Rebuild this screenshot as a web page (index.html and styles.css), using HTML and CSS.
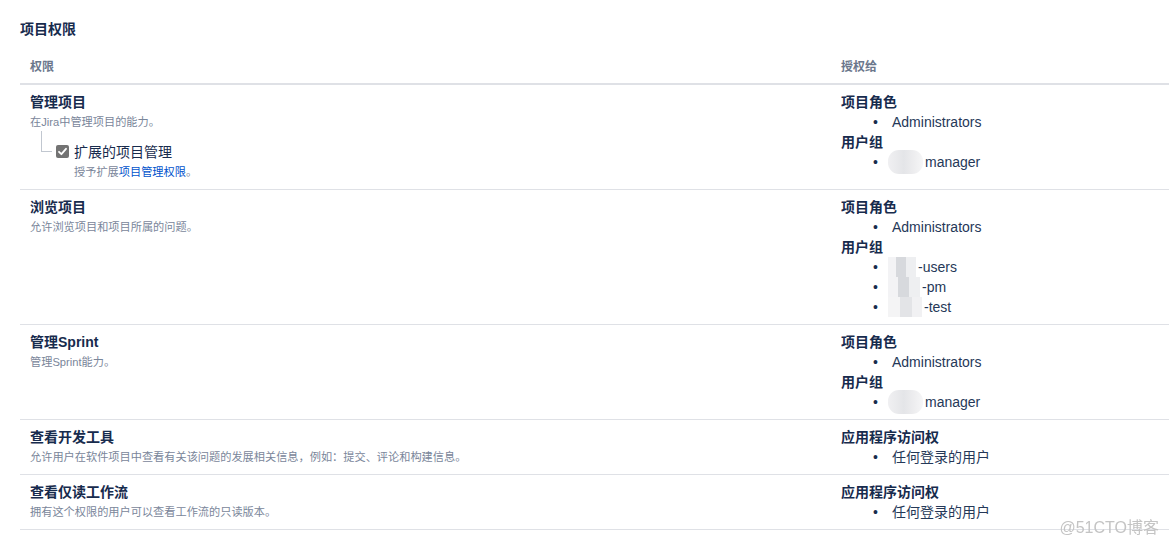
FILE: index.html
```
<!DOCTYPE html>
<html lang="zh-CN">
<head>
<meta charset="UTF-8">
<title>项目权限</title>
<link rel="stylesheet" href="styles.css">
</head>
<body>
<div class="page">
  <h2 class="title">项目权限</h2>
  <table class="perms">
    <thead>
      <tr><th class="col-name">权限</th><th>授权给</th></tr>
    </thead>
    <tbody>
      <tr>
        <td>
          <div class="perm-name">管理项目</div>
          <div class="perm-desc">在Jira中管理项目的能力。</div>
          <div class="sub">
            <div class="sub-row">
              <span class="connector"></span>
              <span class="check"><svg width="13" height="13" viewBox="0 0 13 13"><path d="M3 6.8 L5.4 9.2 L10 3.8" fill="none" stroke="#fff" stroke-width="1.8" stroke-linecap="round" stroke-linejoin="round"/></svg></span>
              <span class="sub-label">扩展的项目管理</span>
            </div>
            <div class="perm-desc sub-desc">授予扩展<a href="#">项目管理权限</a>。</div>
          </div>
        </td>
        <td>
          <div class="grant-title">项目角色</div>
          <ul class="grant-list"><li>Administrators</li></ul>
          <div class="grant-title">用户组</div>
          <ul class="grant-list"><li><span class="blur round"></span>manager</li></ul>
        </td>
      </tr>
      <tr>
        <td>
          <div class="perm-name">浏览项目</div>
          <div class="perm-desc">允许浏览项目和项目所属的问题。</div>
        </td>
        <td>
          <div class="grant-title">项目角色</div>
          <ul class="grant-list"><li>Administrators</li></ul>
          <div class="grant-title">用户组</div>
          <ul class="grant-list">
            <li><span class="blur mosaic short"></span>-users</li>
            <li><span class="blur mosaic"></span>-pm</li>
            <li><span class="blur mosaic wide"></span>-test</li>
          </ul>
        </td>
      </tr>
      <tr>
        <td>
          <div class="perm-name">管理Sprint</div>
          <div class="perm-desc">管理Sprint能力。</div>
        </td>
        <td>
          <div class="grant-title">项目角色</div>
          <ul class="grant-list"><li>Administrators</li></ul>
          <div class="grant-title">用户组</div>
          <ul class="grant-list"><li><span class="blur round"></span>manager</li></ul>
        </td>
      </tr>
      <tr>
        <td>
          <div class="perm-name">查看开发工具</div>
          <div class="perm-desc">允许用户在软件项目中查看有关该问题的发展相关信息，例如：提交、评论和构建信息。</div>
        </td>
        <td>
          <div class="grant-title">应用程序访问权</div>
          <ul class="grant-list"><li>任何登录的用户</li></ul>
        </td>
      </tr>
      <tr>
        <td>
          <div class="perm-name">查看仅读工作流</div>
          <div class="perm-desc">拥有这个权限的用户可以查看工作流的只读版本。</div>
        </td>
        <td>
          <div class="grant-title">应用程序访问权</div>
          <ul class="grant-list"><li>任何登录的用户</li></ul>
        </td>
      </tr>
    </tbody>
  </table>
</div>
<div class="watermark">@51CTO博客</div>
</body>
</html>
```

FILE: styles.css
```
body{margin:0;background:#fff;color:#172b4d;font-family:"Liberation Sans","Noto Sans CJK SC",sans-serif;font-size:14px;line-height:20px;}
.page{padding:19px 0 0 20px;}
.title{margin:0;font-size:14px;line-height:20px;font-weight:bold;color:#172b4d;}

/* table */
.perms{width:100%;border-collapse:separate;border-spacing:0;}
.perms th{text-align:left;font-size:12px;font-weight:600;color:#6b778c;padding:18px 10px 6px 10px;border-bottom:2px solid #dfe1e6;line-height:20px;}
.perms th.col-name{width:791px;}
.perms td{vertical-align:top;padding:7px 10px;border-bottom:1px solid #dfe1e6;}

.perm-name{font-weight:bold;color:#172b4d;}
.perm-desc{font-size:11.2px;color:#7a869a;}
.perm-desc a{color:#0052cc;text-decoration:none;}

/* sub permission */
.sub{margin:9px 0 0 11px;}
.sub-row{display:flex;align-items:center;height:21px;}
.connector{align-self:flex-start;box-sizing:border-box;width:11px;height:21px;margin-top:-10px;border-left:1px solid #c1c7d0;border-bottom:1px solid #c1c7d0;}
.check{display:inline-flex;width:13px;height:13px;margin-left:4px;background:#737373;border-radius:2px;}
.sub-label{margin-left:5px;color:#172b4d;}
.sub-desc{padding-left:33px;}

/* grants */
.grant-title{font-weight:bold;color:#172b4d;}
.grant-list{list-style:none;margin:0;padding:0;}
.grant-list li{display:flex;align-items:center;height:20px;color:#253858;}
.grant-list li::before{content:"•";display:inline-block;width:19px;margin-left:32px;color:#172b4d;}

.blur{display:inline-block;height:24px;width:35px;margin:0 2px 0 -4px;}
.blur.round{border-radius:11px;background:linear-gradient(90deg,#f0f0f2 0,#e4e5e8 45%,#ececee 70%,#f6f6f7 100%);}
.blur.mosaic{height:20px;width:32px;background:linear-gradient(90deg,#f3f3f5 0 30%,#d7d9dd 30% 65%,#eeeff1 65%);}
.blur.short{width:28px;}
.blur.wide{width:34px;background:linear-gradient(90deg,#f4f4f5 0 35%,#e3e4e7 35% 70%,#f1f1f3 70%);}

.watermark{position:fixed;right:10px;bottom:10px;font-size:16px;line-height:20px;color:#c4c4c4;}
```
